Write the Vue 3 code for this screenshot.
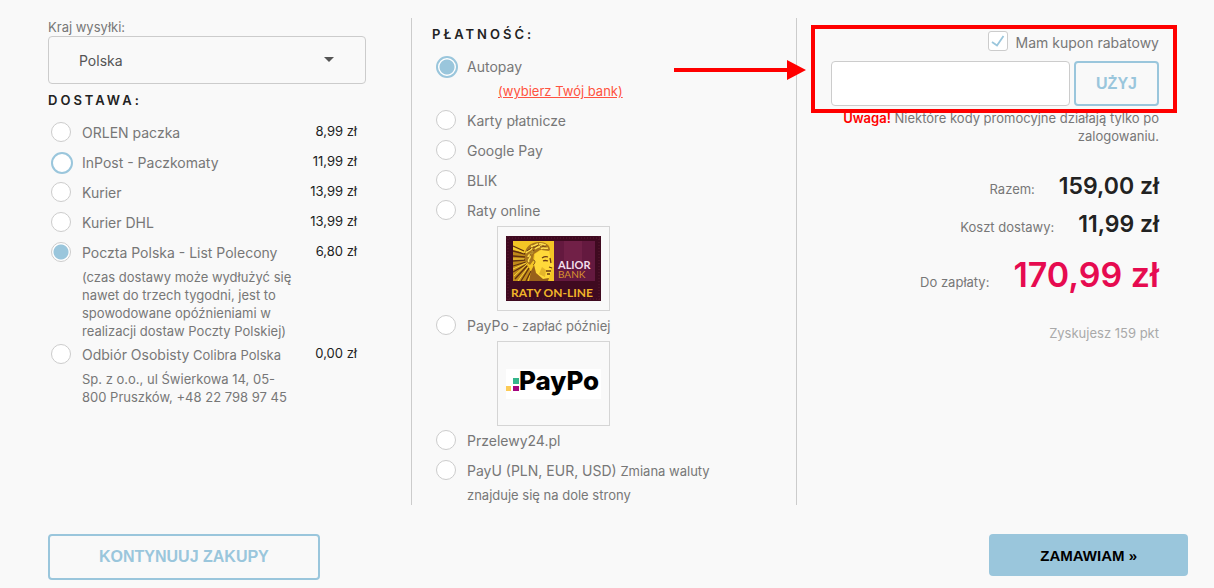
<script setup>
import { ref } from 'vue';

const country = ref('Polska');
const delivery = ref('poczta');
const payment = ref('autopay');
const hasCoupon = ref(true);
const coupon = ref('');

const deliveries = [
  { id: 'orlen', name: 'ORLEN paczka', price: '8,99 zł' },
  { id: 'inpost', name: 'InPost - Paczkomaty', price: '11,99 zł', active: true },
  { id: 'kurier', name: 'Kurier', price: '13,99 zł' },
  { id: 'dhl', name: 'Kurier DHL', price: '13,99 zł' },
  {
    id: 'poczta',
    name: 'Poczta Polska - List Polecony',
    note: '(czas dostawy może wydłużyć się nawet do trzech tygodni, jest to spowodowane opóźnieniami w realizacji dostaw Poczty Polskiej)',
    noteBelow: true,
    price: '6,80 zł'
  },
  {
    id: 'odbior',
    name: 'Odbiór Osobisty',
    note: 'Colibra Polska Sp. z o.o., ul Świerkowa 14, 05-800 Pruszków, +48 22 798 97 45',
    price: '0,00 zł'
  }
];

const payments = [
  { id: 'autopay', name: 'Autopay', link: '(wybierz Twój bank)', active: true },
  { id: 'karty', name: 'Karty płatnicze' },
  { id: 'google', name: 'Google Pay' },
  { id: 'blik', name: 'BLIK' },
  { id: 'raty', name: 'Raty online', logo: 'alior' },
  { id: 'paypo', name: 'PayPo', note: '- zapłać później', logo: 'paypo' },
  { id: 'p24', name: 'Przelewy24.pl' },
  { id: 'payu', name: 'PayU (PLN, EUR, USD)', note: 'Zmiana waluty znajduje się na dole strony' }
];
</script>

<template>
  <main class="checkout">
    <div class="columns">
      <section class="column delivery">
        <label class="country-label" for="country">Kraj wysyłki:</label>
        <div class="country">
          <select id="country" v-model="country">
            <option>Polska</option>
          </select>
          <svg class="caret" width="10" height="5" viewBox="0 0 10 5">
            <path d="M0 0h10L5 5z" fill="#555" />
          </svg>
        </div>
        <h2 class="heading">DOSTAWA:</h2>
        <div v-for="item in deliveries" :key="item.id" class="option">
          <span class="radio-cell">
            <input
              :id="item.id"
              v-model="delivery"
              type="radio"
              name="delivery"
              class="radio"
              :class="{ active: item.active }"
              :value="item.id"
            />
          </span>
          <label class="option-label" :for="item.id">
            <span class="option-name">{{ item.name }}</span>
            {{ ' ' }}
            <span v-if="item.note" class="option-note" :class="{ below: item.noteBelow }">{{ item.note }}</span>
          </label>
          <span class="price">{{ item.price }}</span>
        </div>
      </section>

      <section class="column payment">
        <h2 class="heading">PŁATNOŚĆ:</h2>
        <div v-for="item in payments" :key="item.id" class="option">
          <span class="radio-cell">
            <input
              :id="item.id"
              v-model="payment"
              type="radio"
              name="payment"
              class="radio"
              :class="{ active: item.active }"
              :value="item.id"
            />
          </span>
          <div class="option-body">
            <label class="option-label" :for="item.id">
              <span class="option-name">{{ item.name }}</span>
              {{ ' ' }}
              <span v-if="item.note" class="option-note">{{ item.note }}</span>
            </label>
            <a v-if="item.link" class="bank-link" href="#">{{ item.link }}</a>
            <div v-if="item.logo" class="logo-box">
              <svg v-if="item.logo === 'alior'" class="logo" width="95" height="65" viewBox="0 0 95 65">
                <rect width="95" height="65" fill="#3f0a20" />
                <path d="M0 2h95M0 63h95M2 0v65M93 0v65" stroke="#5a1a30" stroke-width="1" stroke-dasharray="1 2" />
                <rect x="48" y="5" width="41" height="40" fill="#64193f" />
                <rect x="58" y="5" width="18" height="20" fill="#712047" />
                <rect x="7" y="5" width="41" height="40" fill="#f4c525" />
                <path d="M7 14l12 3 1 9 4 8-2 11H7z" fill="#c08a1a" />
                <path
                  d="M7 10l11 5M7 15l12 3M7 20l12 1M7 25l12-1M7 30l13-4M7 36l14-8M9 43l12-13M15 45l8-13M20 45l5-10"
                  stroke="#5f3010"
                  stroke-width="1.3"
                />
                <path d="M7 12l11 5M7 23l11 0M7 33l13-6M8 40l13-12M12 45l10-14" stroke="#f7d23c" stroke-width="1" />
                <path d="M19 18c0-7 6-12 14-12 7 0 11 3 11 8l-3 2-7-2-6 4-1 7-3 4-5-4z" fill="#a8741c" />
                <path
                  d="M20 17c2-3 5-2 6-5M22 21c0-3 4-2 5-6M25 10c3 1 5-2 7-2M29 13c2-3 5-1 7-4M35 13c2-2 4 0 7-1M23 26c-2-3 2-3 1-6M33 8c3-1 5 1 7 1"
                  fill="none"
                  stroke="#ffdf4e"
                  stroke-width="1.5"
                />
                <path
                  d="M21 15c2-2 3-1 4-3M24 19c1-3 3-2 4-5M27 11c2 1 4-1 5-2M34 11c2-2 4 0 6-1"
                  fill="none"
                  stroke="#5f3010"
                  stroke-width="0.8"
                />
                <path d="M29 18l6-4 8 1 2 9 3 6-3 2v4l-2 6-6 1-7-6-2-9z" fill="#ffd93a" />
                <path d="M28 29l2 8 7 6 6-1-1 3H23l2-10z" fill="#98601a" />
                <path d="M36 31l4 3-1 7-6-3z" fill="#d9a525" opacity="0.7" />
                <path
                  d="M36 22q3-2 6-1M37 25q2-1 5 0M44 22l1 5M43 31l3 1M40 35l5 0M41 38l3 0"
                  fill="none"
                  stroke="#6b3812"
                  stroke-width="1.3"
                />
                <path d="M27 24c3 0 2 4 0 5" fill="none" stroke="#7b4a14" stroke-width="1" />
                <text x="52" y="33" class="alior-name">ALIOR</text>
                <text x="52" y="42" class="alior-bank">BANK</text>
                <text x="5" y="61" class="alior-raty">RATY ON-LINE</text>
              </svg>
              <svg v-else class="logo" width="95" height="30" viewBox="0 0 95 30">
                <rect width="95" height="30" fill="#fff" />
                <rect x="7" y="9" width="6" height="6" fill="#35b58b" />
                <rect x="0" y="17" width="5" height="5" fill="#fccb57" />
                <rect x="7" y="17" width="6" height="5" fill="#a5047f" />
                <text x="13" y="21" class="paypo-name">PayPo</text>
              </svg>
            </div>
          </div>
        </div>
      </section>

      <section class="column summary">
        <div class="coupon">
          <label class="coupon-toggle">
            <span class="checkbox-wrap">
              <input v-model="hasCoupon" type="checkbox" class="checkbox" />
              <svg v-if="hasCoupon" class="check" width="14" height="12" viewBox="0 0 14 12">
                <path d="M1 7l5 3.5L12.500 1" fill="none" stroke="#9ac6dc" stroke-width="1.800" />
              </svg>
            </span>
            Mam kupon rabatowy
          </label>
          <div class="coupon-form">
            <input v-model="coupon" type="text" class="coupon-input" aria-label="Kupon rabatowy" />
            <button type="button" class="btn btn-outline btn-use">UŻYJ</button>
          </div>
          <div class="frame"></div>
          <svg class="arrow" width="132" height="20" viewBox="0 0 132 20">
            <path d="M0 8h113V0l19 10-19 10v-8H0z" fill="#f00" />
          </svg>
        </div>
        <p class="warning"><strong>Uwaga!</strong> Niektóre kody promocyjne działają tylko po zalogowaniu.</p>
        <dl class="totals">
          <div class="total">
            <dt>Razem:</dt>
            <dd>159,00 zł</dd>
          </div>
          <div class="total">
            <dt>Koszt dostawy:</dt>
            <dd>11,99 zł</dd>
          </div>
          <div class="total grand">
            <dt>Do zapłaty:</dt>
            <dd>170,99 zł</dd>
          </div>
        </dl>
        <p class="points">Zyskujesz 159 pkt</p>
      </section>
    </div>

    <footer class="actions">
      <button type="button" class="btn btn-outline btn-back">KONTYNUUJ ZAKUPY</button>
      <button type="button" class="btn btn-order">ZAMAWIAM »</button>
    </footer>
  </main>
</template>

<style>
body {
  margin: 0;
  background: #f9f9f9;
}
</style>

<style scoped>
.checkout {
  padding: 18px 26px 8px 48px;
  font-family: Inter, "Liberation Sans", sans-serif;
  font-size: 13px;
  line-height: 18px;
  color: #777;
}

.checkout *,
.checkout {
  box-sizing: border-box;
}

.columns {
  display: grid;
  grid-template-columns: 364fr 385fr 391fr;
}

.column {
  padding-bottom: 1px;
}

.delivery,
.payment {
  border-right: 1px solid #ccc;
}

.payment {
  padding-left: 20px;
}

.country-label {
  display: block;
}

.country {
  position: relative;
  margin-right: 45px;
}

.country select {
  display: block;
  width: 100%;
  height: 48px;
  padding: 0 30px;
  border: 1px solid #ccc;
  border-radius: 4px;
  background: transparent;
  appearance: none;
  font-family: inherit;
  font-size: 14px;
  color: #555;
}

.caret {
  position: absolute;
  top: 21px;
  right: 32px;
  pointer-events: none;
}

.heading {
  margin: 0 0 2px;
  font-size: 13px;
  font-weight: 600;
  line-height: 32px;
  letter-spacing: 3px;
  color: #222;
}

.option {
  display: flex;
  align-items: flex-start;
}

.radio-cell {
  flex: 0 0 34px;
  padding: 4px 0 0 3px;
}

.payment .radio-cell {
  flex-basis: 35px;
  padding-left: 4px;
}

.radio {
  display: block;
  width: 20px;
  height: 20px;
  margin: 0;
  border: 1px solid #ccc;
  border-radius: 50%;
  background: #fff;
  appearance: none;
}

.radio:checked {
  background: radial-gradient(circle, #9ac6dc 7px, #fff 8px);
}

.radio.active {
  width: 22px;
  height: 22px;
  border: 2px solid #9ac6dc;
}

.option-body {
  flex: 1;
}

.option-label {
  display: block;
  flex: 0 0 214px;
}

.payment .option-label {
  max-width: 250px;
}

.option-name {
  font-size: 14px;
  line-height: 30px;
}

.option-note.below {
  display: block;
}

.price {
  flex: 1;
  margin-right: 54px;
  line-height: 26px;
  text-align: right;
  white-space: nowrap;
  color: #222;
}

.bank-link {
  display: block;
  width: fit-content;
  margin: 0 0 6px 31px;
  color: #ff5340;
}

.logo-box {
  display: flex;
  align-items: center;
  justify-content: center;
  width: 113px;
  height: 85px;
  margin-left: 30px;
  border: 1px solid #d5d5d5;
}

.logo {
  overflow: visible;
}

.alior-name {
  font: 700 11px Lato, sans-serif;
  fill: #f3dfea;
}

.alior-bank {
  font: 400 10px Lato, sans-serif;
  fill: #d9942e;
}

.alior-raty {
  font: 700 12px Lato, sans-serif;
  fill: #f0b429;
}

.paypo-name {
  font: 800 26px Inter, sans-serif;
  fill: #000;
}

.summary {
  padding: 12px 29px 0 34px;
  text-align: right;
}

.coupon {
  position: relative;
}

.coupon-toggle {
  display: flex;
  align-items: center;
  justify-content: flex-end;
  gap: 8px;
  height: 26px;
  margin-bottom: 5px;
  font-size: 14px;
}

.checkbox-wrap {
  position: relative;
  margin-top: -4px;
}

.checkbox {
  display: block;
  width: 20px;
  height: 20px;
  margin: 0;
  border: 1px solid #ccc;
  border-radius: 3px;
  background: #fff;
  appearance: none;
}

.check {
  position: absolute;
  top: 4px;
  left: 3px;
  pointer-events: none;
}

.coupon-form {
  display: flex;
  gap: 4px;
}

.coupon-input {
  flex: 1;
  min-width: 0;
  height: 45px;
  padding: 0 12px;
  border: 1px solid #ccc;
  border-radius: 4px;
  background: #fff;
  font: inherit;
}

.frame {
  position: absolute;
  inset: -5px -18px -7px -20px;
  border: 4px solid #f00;
  pointer-events: none;
}

.arrow {
  position: absolute;
  top: 30px;
  right: calc(100% + 25px);
}

.warning {
  margin: 3px 0 0;
}

.warning strong {
  font-weight: 600;
  color: #f00;
}

.totals {
  margin: 22px 0 0;
}

.total {
  display: flex;
  align-items: baseline;
  justify-content: flex-end;
  gap: 24px;
}

.total dt {
  font-size: 13px;
}

.total dd {
  margin: 0;
  font-size: 23px;
  font-weight: 600;
  line-height: 38px;
  color: #222;
}

.total.grand {
  margin-top: 5px;
}

.total.grand dd {
  font-size: 34px;
  line-height: 54px;
  color: #e60b50;
}

.points {
  margin: 22px 0 0;
  color: #a9a9a9;
}

.actions {
  display: flex;
  align-items: flex-start;
  justify-content: space-between;
  margin-top: 29px;
}

.btn {
  border-radius: 4px;
  font-family: "Liberation Sans", Arial, sans-serif;
  font-size: 16px;
  font-weight: 700;
  cursor: pointer;
}

.btn-outline {
  border: 2px solid #9ac6dc;
  background: transparent;
  color: #9ac6dc;
}

.btn-use {
  width: 85px;
  padding: 0;
}

.btn-back {
  height: 46px;
  padding: 0 49px;
}

.btn-order {
  height: 42px;
  padding: 0 51px;
  border: 0;
  background: #9ac6dc;
  font-size: 15px;
  color: #000;
}
</style>
